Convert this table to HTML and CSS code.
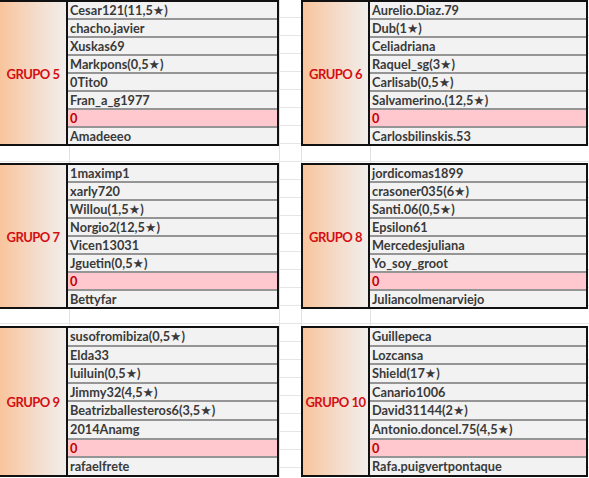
FILE: index.html
```html
<!DOCTYPE html>
<html lang="es">
<head>
<meta charset="utf-8">
<title>Grupos</title>
<link rel="stylesheet" href="styles.css">
</head>
<body>
<div class="sheet">
  <section class="block left">
    <div class="group"><span>GRUPO 5</span></div>
    <ul class="names">
      <li>Cesar121(11,5★)</li>
      <li>chacho.javier</li>
      <li>Xuskas69</li>
      <li>Markpons(0,5★)</li>
      <li>0Tito0</li>
      <li>Fran_a_g1977</li>
      <li class="empty">0</li>
      <li>Amadeeeo</li>
    </ul>
  </section>
  <section class="block right">
    <div class="group"><span>GRUPO 6</span></div>
    <ul class="names">
      <li>Aurelio.Diaz.79</li>
      <li>Dub(1★)</li>
      <li>Celiadriana</li>
      <li>Raquel_sg(3★)</li>
      <li>Carlisab(0,5★)</li>
      <li>Salvamerino.(12,5★)</li>
      <li class="empty">0</li>
      <li>Carlosbilinskis.53</li>
    </ul>
  </section>
  <section class="block left">
    <div class="group"><span>GRUPO 7</span></div>
    <ul class="names">
      <li>1maximp1</li>
      <li>xarly720</li>
      <li>Willou(1,5★)</li>
      <li>Norgio2(12,5★)</li>
      <li>Vicen13031</li>
      <li>Jguetin(0,5★)</li>
      <li class="empty">0</li>
      <li>Bettyfar</li>
    </ul>
  </section>
  <section class="block right">
    <div class="group"><span>GRUPO 8</span></div>
    <ul class="names">
      <li>jordicomas1899</li>
      <li>crasoner035(6★)</li>
      <li>Santi.06(0,5★)</li>
      <li>Epsilon61</li>
      <li>Mercedesjuliana</li>
      <li>Yo_soy_groot</li>
      <li class="empty">0</li>
      <li>Juliancolmenarviejo</li>
    </ul>
  </section>
  <section class="block left tall">
    <div class="group"><span>GRUPO 9</span></div>
    <ul class="names">
      <li>susofromibiza(0,5★)</li>
      <li>Elda33</li>
      <li>luiluin(0,5★)</li>
      <li>Jimmy32(4,5★)</li>
      <li>Beatrizballesteros6(3,5★)</li>
      <li>2014Anamg</li>
      <li class="empty">0</li>
      <li>rafaelfrete</li>
    </ul>
  </section>
  <section class="block right tall">
    <div class="group"><span>GRUPO 10</span></div>
    <ul class="names">
      <li>Guillepeca</li>
      <li>Lozcansa</li>
      <li>Shield(17★)</li>
      <li>Canario1006</li>
      <li>David31144(2★)</li>
      <li>Antonio.doncel.75(4,5★)</li>
      <li class="empty">0</li>
      <li>Rafa.puigvertpontaque</li>
    </ul>
  </section>
</div>
</body>
</html>
```
FILE: styles.css
```css
html, body {
  margin: 0;
  padding: 0;
}
body {
  width: 589px;
  min-height: 478px;
  overflow: hidden;
  font-family: Lato, "DejaVu Sans", sans-serif;
  background:
    linear-gradient(#e3e3e3, #e3e3e3) 69px 0 / 1px 100% no-repeat,
    linear-gradient(#e3e3e3, #e3e3e3) 279px 0 / 1px 100% no-repeat,
    linear-gradient(#e3e3e3, #e3e3e3) 301px 0 / 1px 100% no-repeat,
    linear-gradient(#e3e3e3, #e3e3e3) 370px 0 / 1px 100% no-repeat,
    repeating-linear-gradient(to bottom, transparent 0 17px, #e6e6e6 17px 18px),
    #ffffff;
}
.sheet {
  display: grid;
  grid-template-columns: 281px 287px;
  column-gap: 22px;
  row-gap: 17px;
  margin-left: -2px;
  align-items: start;
}
.block {
  display: grid;
  grid-template-columns: 68px 1fr;
  border: 2px solid #111;
  background: #f2f2f2;
}
.right {
  grid-template-columns: 67px 1fr;
}
.group {
  border-right: 2px solid #111;
  background: linear-gradient(90deg, #f9c49c 0%, #f4dccb 55%, #f2eeeb 100%);
  display: flex;
  align-items: center;
  justify-content: center;
  color: #d40f14;
  font-weight: 700;
  font-size: 13px;
  letter-spacing: -0.5px;
  padding-top: 1px;
  white-space: nowrap;
}
.names {
  list-style: none;
  margin: 0;
  padding: 0;
  display: flex;
  flex-direction: column;
}
.names li {
  height: 16px;
  line-height: 17px;
  padding-left: 2px;
  font-size: 12.75px;
  font-weight: 700;
  color: #3a3a3a;
  white-space: nowrap;
  overflow: hidden;
  background: #f2f2f2;
}
.names li + li {
  border-top: 2px solid #959595;
}
.tall .names li {
  height: 16.6px;
  line-height: 17.6px;
}
.names li.empty {
  background: #ffc7ce;
  color: #c00000;
}
```
